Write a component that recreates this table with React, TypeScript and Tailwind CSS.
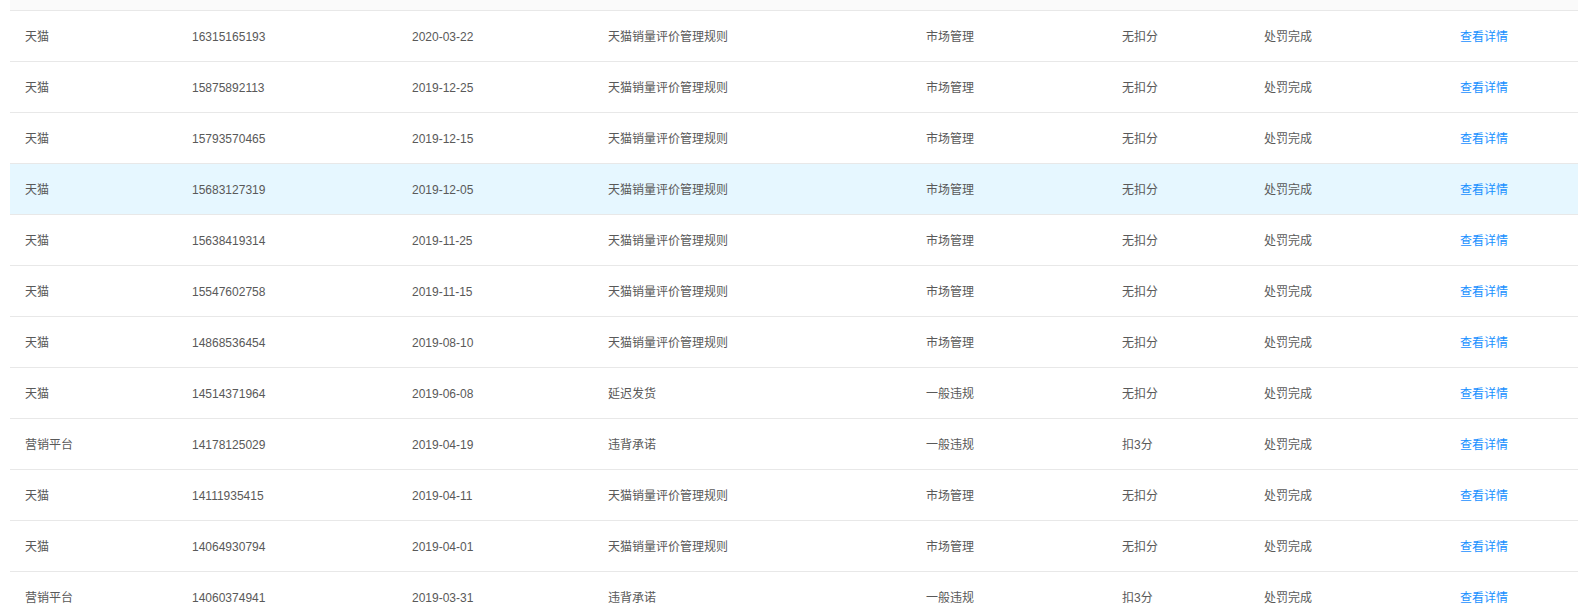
import React from "react";

type Row = {
  platform: string;
  id: string;
  date: string;
  rule: string;
  type: string;
  score: string;
  status: string;
};

const R1 = "天猫销量评价管理规则";
const rows: Row[] = [
  { platform: "天猫", id: "16315165193", date: "2020-03-22", rule: R1, type: "市场管理", score: "无扣分", status: "处罚完成" },
  { platform: "天猫", id: "15875892113", date: "2019-12-25", rule: R1, type: "市场管理", score: "无扣分", status: "处罚完成" },
  { platform: "天猫", id: "15793570465", date: "2019-12-15", rule: R1, type: "市场管理", score: "无扣分", status: "处罚完成" },
  { platform: "天猫", id: "15683127319", date: "2019-12-05", rule: R1, type: "市场管理", score: "无扣分", status: "处罚完成" },
  { platform: "天猫", id: "15638419314", date: "2019-11-25", rule: R1, type: "市场管理", score: "无扣分", status: "处罚完成" },
  { platform: "天猫", id: "15547602758", date: "2019-11-15", rule: R1, type: "市场管理", score: "无扣分", status: "处罚完成" },
  { platform: "天猫", id: "14868536454", date: "2019-08-10", rule: R1, type: "市场管理", score: "无扣分", status: "处罚完成" },
  { platform: "天猫", id: "14514371964", date: "2019-06-08", rule: "延迟发货", type: "一般违规", score: "无扣分", status: "处罚完成" },
  { platform: "营销平台", id: "14178125029", date: "2019-04-19", rule: "违背承诺", type: "一般违规", score: "扣3分", status: "处罚完成" },
  { platform: "天猫", id: "14111935415", date: "2019-04-11", rule: R1, type: "市场管理", score: "无扣分", status: "处罚完成" },
  { platform: "天猫", id: "14064930794", date: "2019-04-01", rule: R1, type: "市场管理", score: "无扣分", status: "处罚完成" },
  { platform: "营销平台", id: "14060374941", date: "2019-03-31", rule: "违背承诺", type: "一般违规", score: "扣3分", status: "处罚完成" },
];

const grid =
  "grid grid-cols-[166px_220px_196px_318px_196px_142px_196px_1fr]";

export default function App() {
  return (
    <div
      className="h-[613px] w-full overflow-hidden bg-white pl-[10px] text-[12px] text-[#595959]"
      style={{ fontFamily: '"Liberation Sans", Arial, "Noto Sans CJK SC", sans-serif' }}
    >
      <div className="h-[11px] border-b border-[#e8e8e8] bg-[#fafafa]" />
      {rows.map((r, i) => (
        <div
          key={r.id}
          className={`${grid} h-[51px] items-center border-b border-[#e8e8e8] pt-[2px] ${
            i === 3 ? "bg-[#e6f7ff]" : "bg-white"
          }`}
        >
          <div className="pl-[15px] pr-4">{r.platform}</div>
          <div className="px-4">{r.id}</div>
          <div className="px-4">{r.date}</div>
          <div className="px-4">{r.rule}</div>
          <div className="px-4">{r.type}</div>
          <div className="px-4">{r.score}</div>
          <div className="px-4">{r.status}</div>
          <div className="px-4">
            <a className="cursor-pointer text-[#1890ff]">查看详情</a>
          </div>
        </div>
      ))}
    </div>
  );
}
